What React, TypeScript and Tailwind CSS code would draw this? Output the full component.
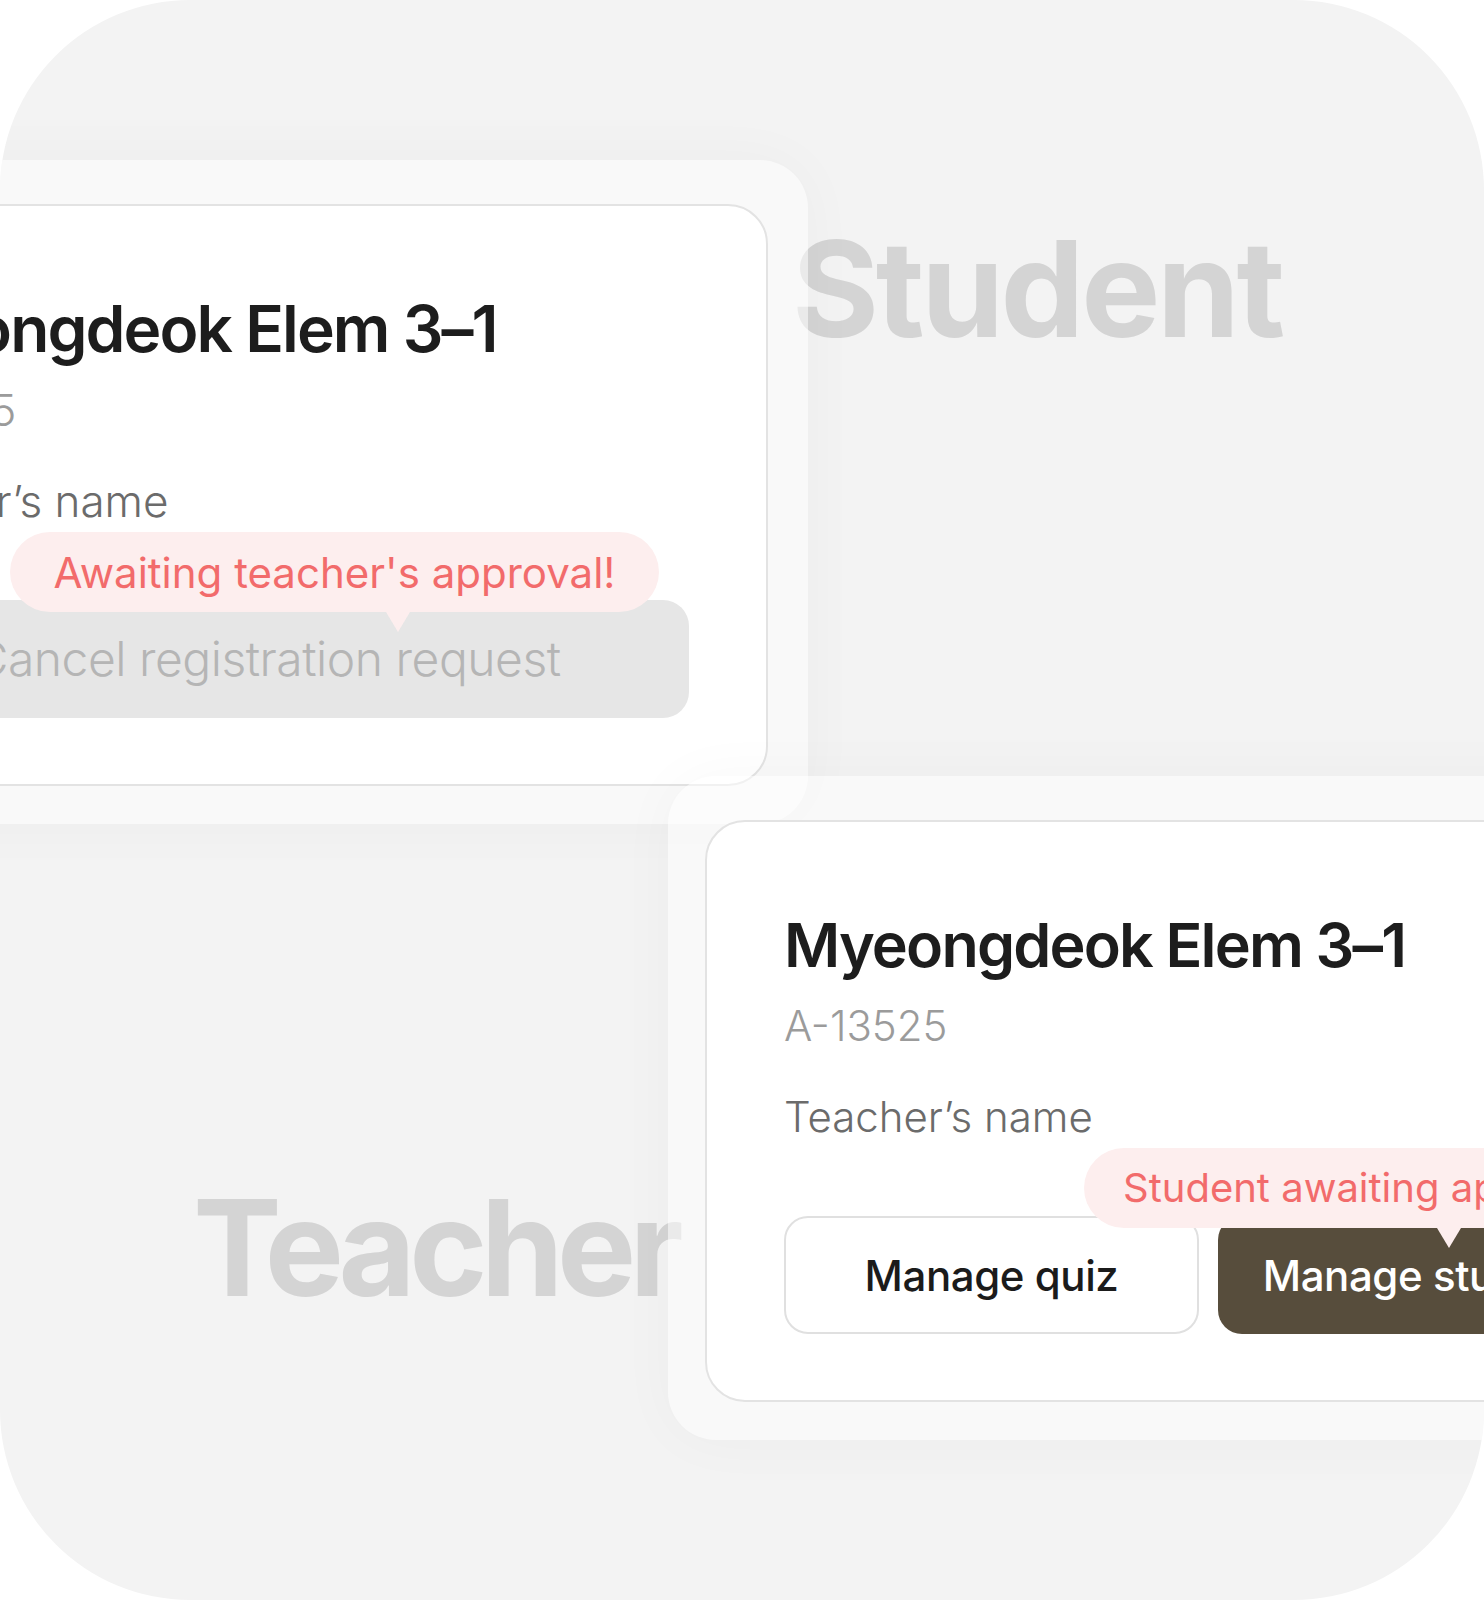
import React from "react";

function Pointer({ left }: { left: number }) {
  return (
    <svg
      className="absolute top-full -translate-x-1/2"
      style={{ left }}
      width="24"
      height="20"
      viewBox="0 0 24 20"
    >
      <path d="M0 0 L24 0 L12 20 Z" fill="#fdeeee" />
    </svg>
  );
}

function StudentCard() {
  return (
    <div className="w-[1002px] rounded-[40px] border-2 border-[#e3e3e3] bg-white px-[77px] pt-[91px] pb-[66px]">
      <div className="h-[64px] whitespace-nowrap text-[64px] font-semibold leading-[64px] tracking-[-0.03em] text-[#1d1d1d]">
        Myeongdeok Elem 3–1
      </div>
      <div className="mt-[28px] h-[42px] whitespace-nowrap text-[44px] font-light leading-[42px] text-[#9b9b9b]">
        A-13525
      </div>
      <div className="mt-[49px] h-[42px] whitespace-nowrap text-[44px] font-light leading-[42px] text-[#6b6b6b]">
        Teacher’s name
      </div>
      <div className="relative mt-[78px] h-[118px]">
        <div className="flex h-full w-full items-center justify-center whitespace-nowrap rounded-[26px] bg-[#e6e6e6] text-[48px] font-light tracking-[-0.01em] text-[#b5b5b5]">
          Cancel registration request
        </div>
        <div className="absolute bottom-[106px] left-[165px] flex h-[80px] w-[649px] items-center justify-center whitespace-nowrap rounded-full bg-[#fdeeee] text-[42px] text-[#f26b6b]">
          Awaiting teacher's approval!
          <Pointer left={388} />
        </div>
      </div>
    </div>
  );
}

function TeacherCard() {
  return (
    <div className="w-[1023px] rounded-[40px] border-2 border-[#e3e3e3] bg-white px-[77px] pt-[91px] pb-[66px]">
      <div className="h-[64px] whitespace-nowrap text-[61px] font-semibold leading-[64px] tracking-[-0.03em] text-[#1d1d1d]">
        Myeongdeok Elem 3–1
      </div>
      <div className="mt-[28px] h-[42px] whitespace-nowrap text-[42px] font-light leading-[42px] text-[#9b9b9b]">
        A-13525
      </div>
      <div className="mt-[49px] h-[42px] whitespace-nowrap text-[42px] font-light leading-[42px] text-[#6b6b6b]">
        Teacher’s name
      </div>
      <div className="relative mt-[78px] h-[118px]">
        <div className="flex h-full gap-[19px]">
          <div className="flex h-full w-[415px] items-center justify-center rounded-[24px] border-2 border-[#e0e0e0] bg-white text-[42px] font-medium tracking-[-0.01em] text-[#1b1b1b]">
            Manage quiz
          </div>
          <div className="flex h-full w-[431px] items-center justify-center rounded-[24px] bg-[#574d3c] text-[42px] font-medium tracking-[-0.01em] text-white">
            Manage students
          </div>
        </div>
        <div className="absolute bottom-[106px] left-[300px] flex h-[80px] items-center whitespace-nowrap rounded-full bg-[#fdeeee] px-[39px] text-[40px] text-[#f26b6b]">
          Student awaiting approval!
          <Pointer left={365} />
        </div>
      </div>
    </div>
  );
}

export default function App() {
  return (
    <div className="h-[1600px] w-[1484px] bg-white font-['Inter',sans-serif]">
      <div className="relative h-full w-full overflow-hidden rounded-[190px] bg-[#f3f3f3]">
        <div className="flex flex-col pt-[160px]">
          <div className="flex items-start">
            <div className="relative z-10 ml-[-274px] shrink-0 rounded-[48px] bg-white/50 px-[40px] pt-[44px] pb-[38px] shadow-[0_0_60px_rgba(0,0,0,0.03)]">
              <StudentCard />
            </div>
            <div className="relative z-0 ml-[-16px] mt-[62px] shrink-0 whitespace-nowrap text-[133px] font-bold leading-none tracking-[-0.025em] text-[#d4d4d4]">
              Student
            </div>
          </div>
          <div className="mt-[-48px] flex items-start">
            <div className="relative z-0 ml-[193px] mt-[405px] w-[475px] shrink-0 whitespace-nowrap text-[133px] font-bold leading-none tracking-[-0.05em] text-[#d4d4d4]">
              Teacher
            </div>
            <div className="relative z-10 shrink-0 rounded-[48px] bg-white/50 px-[37px] pt-[44px] pb-[38px] shadow-[0_0_60px_rgba(0,0,0,0.03)]">
              <TeacherCard />
            </div>
          </div>
        </div>
      </div>
    </div>
  );
}
